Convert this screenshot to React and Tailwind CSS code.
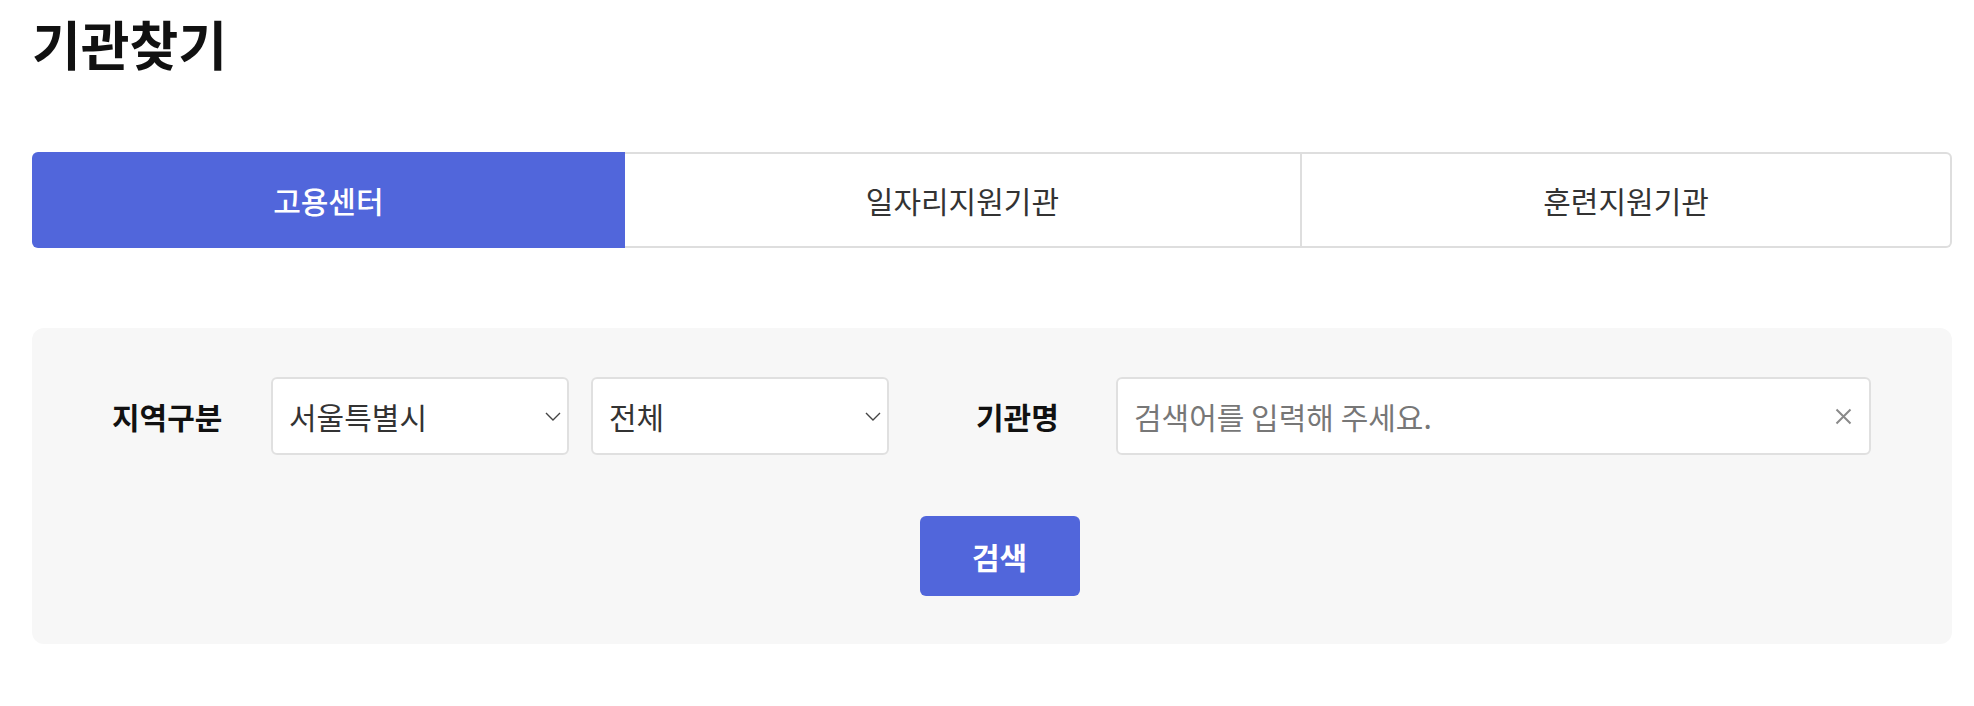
import { useState } from 'react'

const tabs = ['고용센터', '일자리지원기관', '훈련지원기관']

function Chevron() {
  return (
    <svg width="16" height="9" viewBox="0 0 16 9" fill="none" className="shrink-0">
      <polyline points="1,1 8,8 15,1" stroke="#444" strokeWidth="1.4" />
    </svg>
  )
}

function SelectBox({ value }) {
  return (
    <button
      type="button"
      className="flex h-[78px] w-[298px] items-center justify-between rounded-[6px] border-2 border-[#e0e0e0] bg-white pl-[16px] pr-[6px] text-[30px] text-[#333]"
    >
      <span>{value}</span>
      <Chevron />
    </button>
  )
}

export default function App() {
  const [active, setActive] = useState(0)
  const [keyword, setKeyword] = useState('')

  return (
    <div className="min-h-screen bg-white pl-[32px] pr-[22px] font-['Noto_Sans_CJK_KR',sans-serif] text-[#111]">
      <h1 className="pt-[17px] text-[53px] font-bold leading-none">기관찾기</h1>

      <div className="mt-[82px] flex h-[96px]">
        {tabs.map((t, i) => {
          const on = i === active
          return (
            <button
              key={t}
              type="button"
              onClick={() => setActive(i)}
              className={
                'flex flex-auto items-center justify-center text-[30px] ' +
                (i === 0 ? 'rounded-l-[6px] ' : '') +
                (i === tabs.length - 1 ? 'rounded-r-[6px] ' : '') +
                (on
                  ? 'bg-[#5166db] font-medium text-white'
                  : 'border-y-2 border-r-2 border-[#dedede] bg-white text-[#333]')
              }
            >
              {t}
            </button>
          )
        })}
      </div>

      <div className="mt-[80px] rounded-[12px] bg-[#f7f7f7] pb-[48px] pl-[80px] pr-[81px] pt-[49px]">
        <div className="flex items-center">
          <div className="w-[159px] shrink-0 text-[30px] font-bold">지역구분</div>
          <SelectBox value="서울특별시" />
          <div className="ml-[22px]">
            <SelectBox value="전체" />
          </div>
          <div className="ml-[87px] w-[140px] shrink-0 text-[30px] font-bold">기관명</div>
          <div className="flex h-[78px] flex-1 items-center rounded-[6px] border-2 border-[#e0e0e0] bg-white pl-[16px] pr-[17px]">
            <input
              value={keyword}
              onChange={e => setKeyword(e.target.value)}
              placeholder="검색어를 입력해 주세요."
              className="min-w-0 flex-1 bg-transparent text-[30px] text-[#333] outline-none placeholder:text-[#777]"
            />
            <svg width="17" height="17" viewBox="0 0 17 17" className="shrink-0">
              <path d="M1.5 1.5 L15.5 15.5 M15.5 1.5 L1.5 15.5" stroke="#8a8a8a" strokeWidth="2" />
            </svg>
          </div>
        </div>

        <div className="mt-[61px] flex justify-center pl-[16px]">
          <button
            type="button"
            className="h-[80px] w-[160px] rounded-[6px] bg-[#5166db] text-[30px] font-bold text-white"
          >
            검색
          </button>
        </div>
      </div>
    </div>
  )
}
